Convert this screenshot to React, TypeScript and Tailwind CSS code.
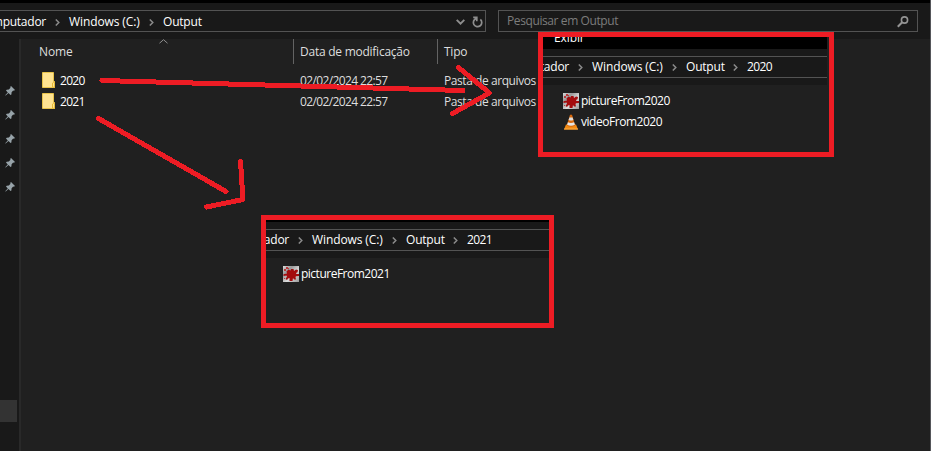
import React from "react";

const FOLDERS = ["2020", "2021"];

const WIDTHS: Record<string, string> = {
  "Windows (C:)": "w-[71px] tracking-[-0.1px]",
  Output: "w-[38px] tracking-[-0.2px]",
  "2020": "w-[26px] tracking-[-0.6px]",
  "2021": "w-[26px] tracking-[-0.6px]",
};

function Label({ text, className = "tracking-[-0.25px]" }: { text: string; className?: string }) {
  return <span className={`shrink-0 whitespace-nowrap ${className}`}>{text}</span>;
}

function Crumbs({ items }: { items: string[] }) {
  return (
    <>
      {items.map((item, i) => (
        <React.Fragment key={item}>
          {i > 0 && (
            <svg width="5" height="7" viewBox="0 0 5 7" className="mr-[9px] ml-[9px] mt-px shrink-0">
              <path d="M0.8 0.5 L3.8 3.5 L0.8 6.5" fill="none" stroke="#8a8a8a" strokeWidth="1.5" />
            </svg>
          )}
          <Label text={item} className={`text-white ${WIDTHS[item] ?? "tracking-[-0.25px]"}`} />
        </React.Fragment>
      ))}
    </>
  );
}

function Pin() {
  return (
    <svg width="10" height="10" viewBox="0 0 10 10" className="ml-[5px] shrink-0">
      <path d="M6 0 L10 4 L8.9 4.8 L8.2 4.6 L6.6 6.3 L6.4 8.5 L5.5 9 L3.5 7 L0.7 9.6 L0.2 9.3 L2.8 6.4 L1 4.6 L1.7 3.7 L3.8 3.5 L5.5 1.8 L5.2 0.9Z" fill="#97a3a9" />
    </svg>
  );
}

function Folder() {
  return (
    <svg width="13" height="16" viewBox="0 0 13 16" className="shrink-0">
      <path d="M0.5 0.5 H11.5 V9 L12.5 10 V15.5 H0.5Z" fill="#ffe391" stroke="#e8c34a" />
      <path d="M10.5 15 V11 L12.5 9.5 V15.5Z" fill="#ffe391" stroke="#e8bb35" />
    </svg>
  );
}

function Splat() {
  return (
    <svg width="16" height="16" viewBox="0 0 16 16" className="shrink-0">
      <defs>
        <linearGradient id="silver" x1="0" y1="0" x2="1" y2="1">
          <stop offset="0" stopColor="#d8d8d8" />
          <stop offset="0.3" stopColor="#999" />
          <stop offset="0.6" stopColor="#dcdcdc" />
          <stop offset="1" stopColor="#999" />
        </linearGradient>
      </defs>
      <rect width="16" height="16" fill="url(#silver)" />
      <path d="M5.5 3.5 L7.5 4.5 L8 3 L10.5 3 L11 5 L13 3.5 L15 4 L14.5 6.2 L13 7 L13.5 8 L16 8 L16 10 L13 10.2 L12.5 11 L13 13.5 L11 13.5 L10 12 L9.5 15 L6.5 15 L6.5 12 L5 12.5 L4 14 L2.5 13 L4 10.5 L3.5 9.5 L0.5 10 L0.5 8.2 L4 7.5 L3.5 5.5Z" fill="#a30c0e" />
      <path d="M1 3h2v2h-2zM3 1h2v2h-2zM5 2h1v1h-1zM1 12h1v1h-1z" fill="#b8383a" />
    </svg>
  );
}

function Cone() {
  return (
    <svg width="16" height="16" viewBox="0 0 16 16" className="shrink-0">
      <path d="M3 10.5 H13 L15 15.5 H1Z" fill="#f28a13" />
      <path d="M1 14.5 H15 V15.5 H1Z" fill="#ffad43" />
      <path d="M7 0.8 H9 L12.2 11.5 Q8 14 3.8 11.5Z" fill="#d9690c" />
      <path d="M6.4 3.6 H9.6 L10.4 6 Q8 7 5.6 6Z" fill="#ddd" />
      <path d="M4.9 8.3 Q8 9.8 11.1 8.3 L11.9 10.8 Q8 12.8 4.1 10.8Z" fill="#e4e4e4" />
    </svg>
  );
}

interface InsetProps {
  year: string;
  className: string;
  shift: string;
  strip: React.ReactNode;
  files: React.ReactNode;
}

function Inset({ year, className, shift, strip, files }: InsetProps) {
  return (
    <section className={`absolute overflow-hidden border-5 border-[#ed1c24] bg-[#202020] ${className}`}>
      {strip}
      <div className="bg-[#191919] pb-[7px]">
        <div className="flex h-[22px] items-center border-y border-[#535353]">
          <div className={`flex items-center justify-end ${shift}`}>
            <Crumbs items={["Computador", "Windows (C:)", "Output", year]} />
          </div>
        </div>
      </div>
      {files}
    </section>
  );
}

export default function App() {
  return (
    <main className="relative flex h-[451px] w-[931px] flex-col overflow-hidden border-r border-[#55565a] bg-[#202020] font-['Open_Sans','Noto_Sans',sans-serif] text-[12px] leading-[16px] text-[#dedede]">
      <header className="flex h-[39px] shrink-0 border-t-3 border-black bg-[#191919] pt-[7px]">
        <div className="flex h-[22px] w-[486px] items-center justify-between border-y border-r border-[#535353]">
          <div className="flex w-[201px] items-center justify-end pt-px">
            <Crumbs items={["Computador", "Windows (C:)", "Output"]} />
          </div>
          <div className="flex items-center gap-[7px] pr-[2px]">
            <svg width="9" height="6" viewBox="0 0 9 6" className="mt-[2px]">
              <path d="M0.7 0.8 L4.5 4.6 L8.3 0.8" fill="none" stroke="#8e8e8e" strokeWidth="1.9" />
            </svg>
            <svg width="11" height="12" viewBox="0 0 11 12" className="mt-px">
              <path d="M8.4 3.4 A4.2 4.2 0 1 1 4 2.6 M1.2 1.3 H4.8 V5.2" fill="none" stroke="#8e8e8e" strokeWidth="1.7" />
            </svg>
          </div>
        </div>
        <div className="ml-[12px] flex h-[22px] w-[420px] items-center justify-between border border-[#535353] pr-[8px] pl-[8px] text-[#7c7c7c]">
          <span className="tracking-[-0.4px]">Pesquisar em Output</span>
          <svg width="12" height="12" viewBox="0 0 12 12" className="mt-px">
            <circle cx="7.5" cy="4" r="3.1" fill="none" stroke="#949494" strokeWidth="1.6" />
            <path d="M5.2 6.2 L0.8 10.8" stroke="#949494" strokeWidth="2" />
          </svg>
        </div>
      </header>

      <div className="flex min-h-0 flex-1">
        <aside className="flex w-[21px] shrink-0 flex-col border-r-2 border-[#292929] bg-[#191919]">
          <div className="mt-[47px] flex flex-col gap-[14px]">
            <Pin />
            <Pin />
            <Pin />
            <Pin />
            <Pin />
          </div>
          <div className="mt-[208px] h-[22px] w-[17px] bg-[#333]" />
        </aside>
        <div className="flex flex-1 flex-col">
          <div className="flex h-[25px] items-center">
            <div className="flex h-full w-[273px] items-center justify-between border-r border-[#636363] pl-[18px]">
              <Label text="Nome" className="tracking-[-0.1px]" />
              <svg width="9" height="5" viewBox="0 0 9 5" className="mr-[125px] self-start">
                <path d="M0.5 4.2 L4.5 0.7 L8.5 4.2" fill="none" stroke="#8e8e8e" />
              </svg>
            </div>
            <div className="flex h-full w-[144px] items-center border-r border-[#636363] pl-[6px]">
              <Label text="Data de modificação" className="tracking-[-0.25px]" />
            </div>
            <div className="pl-[6px]">
              <Label text="Tipo" />
            </div>
          </div>
          <div className="mt-[6px] flex flex-col">
            {FOLDERS.map((name) => (
              <div key={name} className="flex h-[21px] items-start pt-[3px]">
                <div className="flex w-[279px] items-start gap-[5px] pl-[21px]">
                  <div className="-mt-px">
                    <Folder />
                  </div>
                  <Label text={name} className="tracking-[-0.7px] text-white" />
                </div>
                <div className="w-[144px]">
                  <Label text="02/02/2024 22:57" className="tracking-[-0.62px]" />
                </div>
                <Label text="Pasta de arquivos" className="tracking-[-0.43px]" />
              </div>
            ))}
          </div>
        </div>
      </div>

      <Inset
        year="2020"
        className="top-[32px] left-[538px] h-[125px] w-[296px] pr-[2px]"
        shift="w-[230px]"
        strip={
          <>
            <div className="h-[12px] overflow-hidden bg-black pl-[11px] text-white">
              <span className="relative -top-[7px] tracking-[-0.1px]">Exibir</span>
            </div>
            <div className="h-[7px] bg-[#191919]" />
          </>
        }
        files={
          <div className="pt-[6px] pl-[20px] text-white">
            <div className="flex h-[21px] items-start gap-[2px] pt-[2px]">
              <Splat />
              <Label text="pictureFrom2020" className="tracking-[-0.5px]" />
            </div>
            <div className="flex h-[21px] items-start gap-[2px] pt-[2px]">
              <Cone />
              <Label text="videoFrom2020" className="tracking-[-0.47px]" />
            </div>
          </div>
        }
      />

      <Inset
        year="2021"
        className="top-[215px] left-[261px] h-[113px] w-[293px]"
        shift="w-[227px]"
        strip={
          <>
            <div className="h-[2px] bg-black" />
            <div className="h-[7px] bg-[#191919]" />
          </>
        }
        files={
          <div className="flex items-center gap-[2px] pt-[8px] pl-[17px] text-white">
            <Splat />
            <Label text="pictureFrom2021" className="tracking-[-0.5px]" />
          </div>
        }
      />

      <svg width="931" height="451" viewBox="0 0 931 451" className="pointer-events-none absolute inset-0" shapeRendering="crispEdges">
        <g fill="none" stroke="#ed1c24" strokeWidth="5" strokeLinecap="round" strokeLinejoin="round">
          <path d="M102 80.5 L463 90.5" />
          <path d="M458.5 67.5 L489.5 93 L452.5 113.5" />
          <path d="M98.5 118.5 L226 191.5" />
          <path d="M240.5 161.5 L243 199.5 L206.5 207" />
        </g>
      </svg>
    </main>
  );
}
